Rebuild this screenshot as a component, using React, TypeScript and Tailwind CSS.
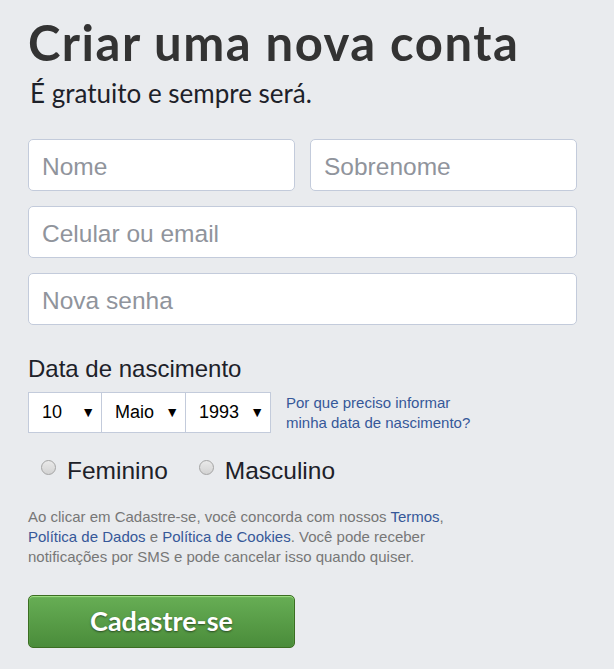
import React, { useState } from "react";

const sans = "font-['Liberation_Sans',Arial,sans-serif]";
const display = "font-['Lato','Open_Sans',sans-serif]";

function TextInput({ placeholder, className = "" }: { placeholder: string; className?: string }) {
  return (
    <input
      type="text"
      placeholder={placeholder}
      className={`h-[52px] rounded-[5px] border border-[#c3cbdb] bg-white px-[13px] pt-[3px] text-[24.5px] text-[#1d2129] outline-none placeholder:text-[#90949c] ${sans} ${className}`}
    />
  );
}

function FakeSelect({ value, className = "" }: { value: string; className?: string }) {
  return (
    <div
      className={`flex h-[41px] items-center justify-between border border-[#c3cbdb] bg-white pl-[13px] pr-[6px] text-[18px] text-black ${sans} ${className}`}
    >
      <span>{value}</span>
      <span className="text-[14px]">▼</span>
    </div>
  );
}

function Radio({ label, checked, onClick }: { label: string; checked: boolean; onClick: () => void }) {
  return (
    <label className="flex cursor-pointer items-center" onClick={onClick}>
      <span className="mb-[7px] flex h-[15px] w-[15px] items-center justify-center rounded-full border border-[#a4a4a4] bg-gradient-to-b from-[#e9e9e9] to-[#d3d3d3]">
        {checked && <span className="h-[6px] w-[6px] rounded-full bg-[#333]" />}
      </span>
      <span className={`ml-[11px] text-[24.5px] leading-[28px] text-[#1d2129] ${sans}`}>{label}</span>
    </label>
  );
}

export default function App() {
  const [gender, setGender] = useState("");

  return (
    <div className="h-[669px] w-[614px] overflow-hidden bg-[#e9ebee] pl-[28px]">
      <h1 className={`mt-[14px] text-[49px] font-bold leading-[56px] tracking-[1.5px] text-[#333] ${display}`}>
        Criar uma nova conta
      </h1>
      <p className={`ml-[2px] mt-[7px] text-[26px] leading-[32px] text-[#1d2129] ${display}`}>
        É gratuito e sempre será.
      </p>

      <div className="mt-[30px] flex w-[549px] flex-col gap-[15px]">
        <div className="flex gap-[15px]">
          <TextInput placeholder="Nome" className="w-[267px]" />
          <TextInput placeholder="Sobrenome" className="w-[267px]" />
        </div>
        <TextInput placeholder="Celular ou email" className="w-full" />
        <TextInput placeholder="Nova senha" className="w-full" />
      </div>

      <div className={`mt-[28px] text-[24px] leading-[32px] text-[#1d2129] ${sans}`}>Data de nascimento</div>
      <div className="mt-[7px] flex items-center">
        <FakeSelect value="10" className="w-[74px]" />
        <FakeSelect value="Maio" className="-ml-px w-[85px]" />
        <FakeSelect value="1993" className="-ml-px w-[86px]" />
        <a href="#" className={`ml-[15px] text-[15px] leading-[20px] text-[#365899] ${sans}`}>
          Por que preciso informar
          <br />
          minha data de nascimento?
        </a>
      </div>

      <div className="mt-[24px] flex gap-[31px] pl-[13px]">
        <Radio label="Feminino" checked={gender === "f"} onClick={() => setGender("f")} />
        <Radio label="Masculino" checked={gender === "m"} onClick={() => setGender("m")} />
      </div>

      <p className={`mt-[22px] w-[460px] text-[15px] leading-[20px] text-[#777] ${sans}`}>
        Ao clicar em Cadastre-se, você concorda com nossos <a href="#" className="text-[#365899]">Termos</a>,{" "}
        <a href="#" className="text-[#365899]">Política de Dados</a> e{" "}
        <a href="#" className="text-[#365899]">Política de Cookies</a>. Você pode receber notificações por SMS e pode
        cancelar isso quando quiser.
      </p>

      <button
        type="button"
        className={`mt-[28px] h-[53px] w-[267px] rounded-[5px] border border-[#3b6e22] bg-gradient-to-b from-[#67ae55] to-[#4a8c3a] text-[27px] font-bold text-white [text-shadow:0_1px_2px_rgba(0,0,0,0.5)] shadow-[inset_0_1px_1px_#a4e388] ${display}`}
      >
        Cadastre-se
      </button>
    </div>
  );
}
